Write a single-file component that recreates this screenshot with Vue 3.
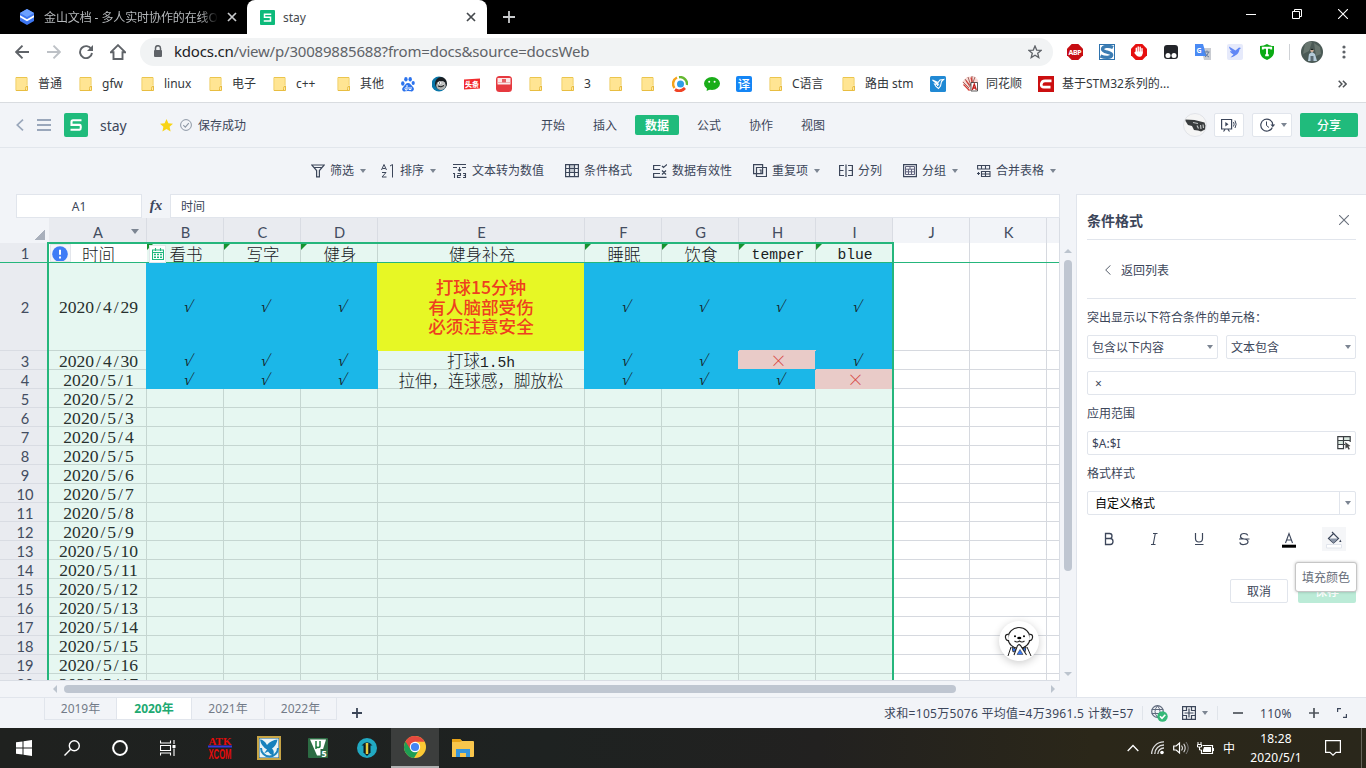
<script setup>
const bookmarks = [
  { w: 64, k: 'folder', t: '普通' },
  { w: 62, k: 'folder', t: 'gfw' },
  { w: 68, k: 'folder', t: 'linux' },
  { w: 64, k: 'folder', t: '电子' },
  { w: 64, k: 'folder', t: 'c++' },
  { w: 64, k: 'folder', t: '其他' },
  { w: 32, k: 'paw' },
  { w: 32, k: 'penguin' },
  { w: 32, k: 'news' },
  { w: 32, k: 'train' },
  { w: 32, k: 'folder' },
  { w: 48, k: 'folder', t: '3' },
  { w: 32, k: 'folder' },
  { w: 32, k: 'folder' },
  { w: 32, k: 'swirl' },
  { w: 32, k: 'wechat' },
  { w: 32, k: 'yi' },
  { w: 73, k: 'folder', t: 'C语言' },
  { w: 89, k: 'folder', t: '路由 stm' },
  { w: 32, k: 'bird' },
  { w: 76, k: 'cards', t: '同花顺' },
  { w: 300, k: 'csdn', t: '基于STM32系列的...' },
]
const menus = ['开始', '插入', '数据', '公式', '协作', '视图']
const tools = [
  { k: 'filter', t: '筛选', w: 70, c: true },
  { k: 'sort', t: '排序', w: 72, c: true },
  { k: 'num', t: '文本转为数值', w: 112 },
  { k: 'cond', t: '条件格式', w: 88 },
  { k: 'valid', t: '数据有效性', w: 100 },
  { k: 'dup', t: '重复项', w: 86, c: true },
  { k: 'split', t: '分列', w: 64 },
  { k: 'group', t: '分组', w: 74, c: true },
  { k: 'merge', t: '合并表格', w: 84, c: true },
]
const cols = ['A', 'B', 'C', 'D', 'E', 'F', 'G', 'H', 'I', 'J', 'K', '']
const body = {
  1: ['时间', '看书', '写字', '健身', '健身补充', '睡眠', '饮食', 'temper', 'blue'],
  2: ['2020/4/29', '√', '√', '√', '打球15分钟\n有人脑部受伤\n必须注意安全', '√', '√', '√', '√'],
  3: ['2020/4/30', '√', '√', '√', '打球1.5h', '√', '√', '×', '√'],
  4: ['2020/5/1', '√', '√', '√', '拉伸，连球感，脚放松', '√', '√', '√', '×'],
}
const rows = Array.from({ length: 20 }, (_, i) => {
  const n = i + 1
  const vals = body[n] || ['2020/5/' + (n - 3)]
  return {
    n,
    cells: cols.map((c, j) => {
      const t = vals[j] || ''
      const isDate = j === 0 && n > 1
      return {
        t,
        parts: isDate ? t.split('/') : null,
        mixed: n === 3 && j === 4 ? ['打球', '1.5h'] : null,
        cls: {
          sel: j < 9,
          active: n === 1 && j === 0,
          tri: n === 1 && j > 0 && j < 9 && j !== 4,
          blue: t === '√',
          pink: t === '×',
          yellow: n === 2 && j === 4,
          latin: n === 1 && j > 6,
          date: isDate,
          last: j === 8,
          head: n === 1,
        },
      }
    }),
  }
})
const sheets = [
  { t: '2019年', w: 73 },
  { t: '2020年', w: 75, on: true },
  { t: '2021年', w: 73 },
  { t: '2022年', w: 72 },
]
</script>

<template>
  <div class="screen" lang="zh-CN">
    <!-- browser tabs -->
    <div class="tabs">
      <div class="tab1">
        <svg width="16" height="16" viewBox="0 0 16 16"><path d="M8 0l7 4v8l-7 4-7-4V4z" fill="#3d76f0"/><path d="M8 0l7 4-7 4-7-4z" fill="#6ba0ff"/><path d="M1 6.2l7 4 7-4v2l-7 4-7-4z" fill="#fff"/></svg>
        <span class="t1">金山文档 - 多人实时协作的在线O</span>
        <svg class="tx" width="10" height="10" viewBox="0 0 10 10"><path d="M1 1l8 8M9 1l-8 8" stroke="#c9cbcd" stroke-width="1.7"/></svg>
      </div>
      <div class="tab2">
        <span class="slogo s15"><svg width="9" height="9" viewBox="0 0 12 12"><path d="M11 1.5H2V5.800H10V10.500H1" fill="none" stroke="#fff" stroke-width="2"/></svg></span>
        <span class="t2">stay</span>
        <svg class="tx" width="10" height="10" viewBox="0 0 10 10"><path d="M1 1l8 8M9 1l-8 8" stroke="#45494d" stroke-width="1.7"/></svg>
      </div>
      <svg class="plus" width="12" height="12" viewBox="0 0 12 12"><path d="M6 0v12M0 6h12" stroke="#c9cbcd" stroke-width="1.8"/></svg>
      <div class="winbtns">
        <svg width="10" height="10"><path d="M0 5.5h10" stroke="#fff"/></svg>
        <svg width="10" height="10"><path d="M.5 2.5h7v7h-7zM2.500 2V.5h7v7H8" fill="none" stroke="#fff"/></svg>
        <svg width="10" height="10"><path d="M0 0l10 10M10 0L0 10" stroke="#fff" stroke-width="1.1"/></svg>
      </div>
    </div>

    <!-- address bar -->
    <div class="addr">
      <svg width="14" height="14" viewBox="0 0 14 14"><path d="M14 7H1.500M7.500 .7L1.200 7l6.300 6.300" fill="none" stroke="#5f6368" stroke-width="1.900"/></svg>
      <svg width="14" height="14" viewBox="0 0 14 14"><path d="M0 7h12.500M6.500 .7L12.800 7l-6.300 6.300" fill="none" stroke="#bdc1c6" stroke-width="1.900"/></svg>
      <svg width="14" height="14" viewBox="0 0 14 14"><path d="M12.300 4.200A6 6 0 1 0 13 8" fill="none" stroke="#5f6368" stroke-width="1.900"/><path d="M14 0v6H8z" fill="#5f6368"/></svg>
      <svg width="16" height="16" viewBox="0 0 16 16"><path d="M8 1.200L1 8.200h2.500V15h9V8.200H15z" fill="none" stroke="#5f6368" stroke-width="1.900"/></svg>
      <div class="omni">
        <svg width="10" height="13" viewBox="0 0 10 13"><path d="M2.500 6V3.200a2.500 2.500 0 0 1 5 0V6" fill="none" stroke="#5f6368" stroke-width="1.500"/><rect x="1" y="5" width="8" height="7" rx="1" fill="#5f6368"/></svg>
        <span class="url"><b>kdocs.cn</b>/view/p/30089885688?from=docs&amp;source=docsWeb</span>
        <svg class="fav" width="14" height="14" viewBox="0 0 14 14"><path d="M7 1l1.700 4.100 4.400.3-3.400 2.800 1.100 4.300L7 10.200l-3.800 2.300 1.100-4.300L.9 5.400l4.400-.3z" fill="none" stroke="#5f6368" stroke-width="1.300"/></svg>
      </div>
      <div class="exts">
        <svg width="16" height="16" viewBox="0 0 16 16"><path d="M4.700 0h6.600L16 4.700v6.600L11.300 16H4.700L0 11.300V4.700z" fill="#c70d12"/><text x="8" y="10.600" font-size="7" font-weight="bold" fill="#fff" text-anchor="middle" textLength="13">ABP</text></svg>
        <svg width="16" height="16" viewBox="0 0 16 16"><rect x=".5" y=".5" width="15" height="15" fill="#fff" stroke="#2f73ad"/><path d="M14 3.500C10 1.500 3.500 2 3.500 5.200S13 8 12.700 11 6 14 1.500 12" fill="none" stroke="#3c7db3" stroke-width="3.300"/></svg>
        <svg width="16" height="16" viewBox="0 0 16 16"><path d="M4.700 0h6.600L16 4.700v6.600L11.300 16H4.700L0 11.300V4.700z" fill="#e60f0f"/><path d="M5.300 8V4.300M7.200 8V3M9.200 8V3.200M11 9V4.600" stroke="#fff" stroke-width="1.400" stroke-linecap="round"/><path d="M4.600 7.500h7.100c.2 3.500-.9 5.300-3.200 5.300S5.200 11.500 3.200 8.700z" fill="#fff"/></svg>
        <svg width="16" height="16" viewBox="0 0 16 16"><rect x="1" y="1" width="14" height="14" rx="3" fill="#23252a"/><circle cx="5" cy="11.500" r="2.500" fill="#fff"/><circle cx="11" cy="11.500" r="2.500" fill="#fff"/></svg>
        <svg width="16" height="16" viewBox="0 0 16 16"><path d="M6 4h10v12H9z" fill="#c9ccd2"/><path d="M0 0h8l3.500 12H0z" fill="#4a8af4"/><text x="1.400" y="8.500" font-size="7" font-weight="bold" fill="#fff">G</text><path d="M9 8h5.500M12 6.500V8M13.500 8q-.8 3.500-3.500 5M10.500 9.500q1 2.500 3.500 3.500" stroke="#6b7f9f" fill="none"/></svg>
        <svg width="16" height="16" viewBox="0 0 16 16"><rect width="16" height="16" rx="2" fill="#e6eafb"/><path d="M2 2.500l6.500 4L12 3.500l2 .6-1.600 1.400C12 9.500 9 12 3.500 13.500l3-3C4 9.500 3 8 3.200 6.800l2 .6C3.300 6 2.300 4.500 2 2.500z" fill="#6187f5"/></svg>
        <svg width="16" height="16" viewBox="0 0 16 16"><path d="M1 2q4 0 7-2 3 2 7 2v6q0 5-7 8-7-3-7-8z" fill="#0aab14"/><path d="M3.800 5.500V3.800h8.400v1.700M8 3.500v7.500M6.200 11.200h3.600" stroke="#fff" stroke-width="1.900" fill="none"/></svg>
      </div>
      <i class="sep"></i>
      <svg class="face" width="22" height="22" viewBox="0 0 22 22"><circle cx="11" cy="11" r="11" fill="#4b5a56"/><path d="M4 3q3-3 7-2l-3 9-6 3zM13 2l6 4 1 7-5 2z" fill="#68766f"/><path d="M7 20l1-7 3-2 3 2 2 7z" fill="#b5cbd8"/><path d="M9.500 15h3v5h-3z" fill="#5a6a72"/><circle cx="11" cy="9.500" r="1.700" fill="#d0ae98"/><path d="M9.200 9q1.800-3 3.600 0z" fill="#15201f"/></svg>
      <svg class="kebab" width="4" height="14"><circle cx="2" cy="2" r="1.600" fill="#5f6368"/><circle cx="2" cy="7" r="1.600" fill="#5f6368"/><circle cx="2" cy="12" r="1.600" fill="#5f6368"/></svg>
    </div>

    <!-- bookmarks -->
    <div class="marks">
      <div v-for="(b, i) in bookmarks" :key="i" class="mark" :style="{ width: b.w + 'px' }">
        <svg width="16" height="16" viewBox="0 0 16 16">
          <g v-if="b.k === 'folder'"><path d="M2 1.500h11v8M2 1.500v13h8" fill="#ffe593" stroke="#ebc54d"/><path d="M2.500 2h10v12h-10z" fill="#ffe593"/><path d="M2 14.500h11.500v-4.500q-2 0-2 2.500v2" fill="#ffe9a4" stroke="#e8bd41"/></g>
          <g v-else-if="b.k === 'paw'" fill="#2c73ed"><ellipse cx="2.800" cy="7.500" rx="1.700" ry="2.200"/><ellipse cx="5.900" cy="3.200" rx="1.700" ry="2.300"/><ellipse cx="10.200" cy="3.300" rx="1.700" ry="2.300"/><ellipse cx="13.200" cy="7" rx="1.600" ry="2.100"/><path d="M8 7c2.200 0 3 2.200 4.600 3.400C15.500 13 13 16 10.500 15.300q-2.500-.5-5 0C2.500 16 .8 13 3.600 10.400 5.300 9 5.800 7 8 7z"/><path d="M7 9v5H5.500q-1.500-1.500 1-3M9 11v2.500h2V11" fill="none" stroke="#fff"/></g>
          <g v-else-if="b.k === 'penguin'"><circle cx="7" cy="8" r="7.500" fill="#0a77a9"/><ellipse cx="9" cy="7.500" rx="6" ry="6.500" fill="#191e22"/><ellipse cx="9" cy="9.500" rx="4.800" ry="4.500" fill="#aeb1b0"/><circle cx="7.500" cy="7" r="1.500" fill="#fff"/><circle cx="11" cy="7" r="1.500" fill="#fff"/><path d="M6 10q3 2 6-.5M7 7h1M10.500 7h1" stroke="#111" fill="none"/></g>
          <g v-else-if="b.k === 'news'"><path d="M0 3.500L16 2.500v10L0 13.500z" fill="#f12c2e"/><text x="8" y="11" font-size="7" font-weight="900" fill="#fff" text-anchor="middle">头条</text></g>
          <g v-else-if="b.k === 'train'"><rect width="16" height="16" rx="3.500" fill="#e6393f"/><path d="M1.500 2h13v6.500h-13z" fill="#fbe9e9"/><path d="M6 3h4v4H6z" fill="#e76064"/><path d="M1.500 6.500h13" stroke="#e9a3a5" stroke-width=".8"/></g>
          <g v-else-if="b.k === 'swirl'" fill="none"><path d="M5 1.500A7 7 0 0 0 2.500 12" stroke="#f7a319" stroke-width="2.500"/><path d="M7 1.200A7 7 0 0 1 15 9" stroke="#65b832" stroke-width="2.500"/><path d="M3 13.500q5 3.500 10-1.500" stroke="#f04224" stroke-width="2.800"/><circle cx="8.500" cy="8" r="3.500" fill="#2f9de6"/></g>
          <g v-else-if="b.k === 'wechat'"><ellipse cx="8" cy="7.500" rx="8" ry="6.500" fill="#1aad19"/><path d="M3 11l-.3 4 4-2z" fill="#1aad19"/><circle cx="5.200" cy="5.800" r="1" fill="#fff"/><circle cx="10.600" cy="5.800" r="1" fill="#fff"/></g>
          <g v-else-if="b.k === 'yi'"><rect width="16" height="16" rx="2" fill="#1485f5"/><text x="8" y="12.500" font-size="12.500" font-weight="500" fill="#fff" text-anchor="middle">译</text></g>
          <g v-else-if="b.k === 'bird'"><rect width="16" height="16" rx="1.500" fill="#2089d4"/><path d="M2.500 4l5.500 2.500L10 4l3.500-.5-2 2L10.500 10 8.500 12.500 6 10.500 4.500 8l3.500.5zM8 6.500L7.500 10" fill="none" stroke="#fff" stroke-width="1.100"/></g>
          <g v-else-if="b.k === 'cards'"><path d="M0 6l5-5 7-1 4 4v11H6z" fill="#f9d9d4"/><path d="M1 6l6 6M3 3l5 8M6 1l3 9M10 0v9M13 1l-3 8" stroke="#8d4a46" stroke-width=".8"/><path d="M1.500 8.500l6 6M9 1.500l1.500 6M4 4.500l4 5" stroke="#d33a33" stroke-width="1.200"/><path d="M9 6.500h6.500v8.500H9z" fill="#fff" stroke="#333" stroke-width=".8"/><path d="M10.300 14l2-6 2 6M11 12h2.700" fill="none" stroke="#c2211d" stroke-width="1.300"/></g>
          <g v-else><rect width="16" height="16" fill="#cb0f10"/><path d="M13.500 4.800H7Q3.800 4.800 3.300 8t2.700 3.200h6.500" fill="none" stroke="#fff" stroke-width="2.700"/></g>
        </svg>
        <span>{{ b.t }}</span>
      </div>
      <svg class="more" width="9" height="8" viewBox="0 0 9 8"><path d="M.7 .8L3.900 4 .7 7.200M4.900 .8L8.100 4 4.900 7.200" fill="none" stroke="#505458" stroke-width="1.500"/></svg>
    </div>

    <!-- document header -->
    <div class="dochead">
      <div class="left">
        <svg width="8" height="12" viewBox="0 0 8 12"><path d="M7 .7L1.300 6 7 11.300" fill="none" stroke="#9aa7bb" stroke-width="1.700"/></svg>
        <svg class="ham" width="14" height="12"><path d="M0 1h14M0 6h14M0 11h14" stroke="#9aa7bb" stroke-width="2"/></svg>
        <span class="slogo s24"><svg width="12" height="12" viewBox="0 0 12 12"><path d="M11.500 1.200H3Q1.500 1.200 1.500 3V5.900H9.500Q10.800 5.900 10.800 8.200T9.500 10.800H.5" fill="none" stroke="#fff" stroke-width="2.100"/></svg></span>
        <span class="dname">stay</span>
        <svg class="star" width="13" height="13" viewBox="0 0 13 13"><path d="M6.500 0l1.900 4.200 4.600.5-3.400 3.100 1 4.700-4.100-2.400-4.100 2.400 1-4.700L0 4.700l4.600-.5z" fill="#f8d416"/></svg>
        <svg class="okc" width="12" height="12" viewBox="0 0 12 12"><circle cx="6" cy="6" r="5.400" fill="none" stroke="#8d97a5"/><path d="M3.300 6.200l2 1.900 3.500-4" fill="none" stroke="#8d97a5" stroke-width="1.100"/></svg>
        <span class="saved">保存成功</span>
      </div>
      <div class="menus"><span v-for="m in menus" :key="m" :class="{ on: m === '数据' }">{{ m }}</span></div>
      <div class="right">
        <svg class="gun" width="24" height="24" viewBox="0 0 24 24"><circle cx="12" cy="12" r="11.500" fill="#f5f5f5" stroke="#e1e3e8"/><path d="M2.500 6.500l9 .5 10 2.500 1 3-.5 4-4 2-3-1-4-.5-2-4-4-1-2.500-4z" fill="#3a3d3f"/><path d="M10 9.500l5 1M14 12.500l1.500 3M17.500 12l.5 4M20 11.500l.5 3.500" stroke="#c2c5c6" stroke-width="1.200"/></svg>
        <span class="hb h1"><svg width="16" height="14" viewBox="0 0 16 14"><path d="M.6 1.500h10v9.500H.6zM2.500 13.500l1.500-2M8.500 13.500L7 11.500" fill="none" stroke="#3c465a" stroke-width="1.200"/><path d="M4.300 4v4.600L7.500 6.300z" fill="#3c465a"/><path d="M12.500 4q1.300 2.200 0 4.500M14 2.500q2.300 3.700 0 7.500" fill="none" stroke="#3c465a"/></svg></span>
        <span class="hb h2"><svg width="15" height="14" viewBox="0 0 15 14"><path d="M12.300 9.500A6 6 0 1 1 12.800 7" fill="none" stroke="#3c465a" stroke-width="1.200"/><path d="M10.400 6.500h4.800L12.800 9.200z" fill="#3c465a"/><path d="M6.500 3.500V7.500l2.500 2" fill="none" stroke="#3c465a"/></svg><i class="car"></i></span>
        <span class="share">分享</span>
      </div>
    </div>

    <!-- data tools -->
    <div class="tools">
      <div v-for="b in tools" :key="b.k" class="tool" :style="{ width: b.w + 'px' }">
        <svg width="14" height="14" viewBox="0 0 14 14" fill="none" stroke="#3c465a" stroke-width="1">
          <path v-if="b.k === 'filter'" d="M.7 1h12.600L8.400 6.500v6.300H5.600V6.500zM3.500 3.500h7" stroke-width="1.200"/>
          <g v-else-if="b.k === 'sort'"><path d="M.5 6L3 .5 5.500 6M1.500 4.500h3M1 8.500h4L1 13h4.500M9 2l2.500-1.500V13.500"/></g>
          <g v-else-if="b.k === 'num'"><path d="M0 .5h13M0 3.500h4M9 3.500h4M6.500 3v4M5 5.500L6.500 7 8 5.500M1.500 9v5M0 9.500h1.500M4.500 9.500h3v2h-3v2h3M10 9.500h2.500v4H10M10.500 11.500h2" stroke-width="1.100"/></g>
          <g v-else-if="b.k === 'cond'"><path d="M4 1h5v8H4z" fill="#c5cad2" stroke="none"/><path d="M.6 .6h12.800v12H.6zM.5 4.500h13M.5 8.500h13M4.500 .5v12M9.500 .5v12" stroke-width="1.200"/></g>
          <g v-else-if="b.k === 'valid'"><path d="M7.500 1.500H.6v4H7M7 9.500H.6v3.800H13.500M9 2l1.500 1.500L14 .5M9 6.500l4 4M13 6.500l-4 4" stroke-width="1.200"/></g>
          <g v-else-if="b.k === 'dup'"><path d="M.6 .6h9v9h-9zM3.500 3.500h10v9h-10zM6.500 6h1.500v4" stroke-width="1.200"/></g>
          <g v-else-if="b.k === 'split'"><path d="M7 .5v12.500M5 1.500H.6v10H5M9 1.500h4.400v10H9M.5 6.500h4M9.500 6.500h4" stroke-width="1.200"/></g>
          <g v-else-if="b.k === 'group'"><path d="M.6 .6h12.800v12H.6z" stroke-width="1.200"/><path d="M2.500 2.500h9v8h-9zM2.500 5.200h9M2.500 7.800h9M5.500 5v5.500M8.500 5v5.500M7 2.500V5" stroke="#62647e"/></g>
          <g v-else><path d="M.6 1.500h12v3.500H.6zM4.500 1.500V5M8.500 1.500V5M4.500 7.500h8.500v5H4.500zM4.500 10h9M8.500 7v5.500M0 9.500h3M1.500 8v3" stroke-width="1.100"/></g>
        </svg>
        <span>{{ b.t }}</span><i v-if="b.c" class="car"></i>
      </div>
    </div>

    <div class="work">
      <div class="sheet">
        <div class="fbar">
          <span class="name">A1</span><span class="fx">fx</span><span class="fml">时间</span>
        </div>
        <div class="gridwrap">
          <div class="grid">
            <div class="corner"></div>
            <div v-for="(c, j) in cols" :key="'c' + j" class="ch" :class="{ csel: j < 9 }">{{ c }}<i v-if="j === 0" class="car big"></i></div>
            <template v-for="r in rows" :key="r.n">
              <div class="rh">{{ r.n }}</div>
              <div v-for="(c, j) in r.cells" :key="j" class="cell" :class="c.cls">
                <span v-if="c.parts"><template v-for="(p, k) in c.parts" :key="k"><i v-if="k" class="sl">/</i>{{ p }}</template></span>
                <span v-else-if="c.mixed">{{ c.mixed[0] }}<i class="mono">{{ c.mixed[1] }}</i></span>
                <span v-else>{{ c.t }}</span>
              </div>
            </template>
          </div>
          <div class="selbox"></div>
          <div class="freeze"></div>
          <div class="warn"><svg width="16" height="16"><circle cx="8" cy="8" r="7.800" fill="#3f7cf6"/><path d="M8 3.800v5M8 10.500v2" stroke="#fff" stroke-width="2"/></svg></div>
          <div class="cal"><svg width="12" height="12" viewBox="0 0 12 12"><path d="M.5 2h11v9.500H.5zM.5 4.500h11M3.500 0v3M8.500 0v3" fill="none" stroke="#20b67c" stroke-width="1.100"/><path d="M2 6.500h8M2 9.200h8" stroke="#20b67c" stroke-width="1.400" stroke-dasharray="2 1"/></svg></div>
          <div class="bear">
            <svg width="32" height="32" viewBox="0 0 32 32"><path d="M8 22l-3 9M24 22l4 9" stroke="#222" fill="none"/><path d="M9 22l5 3-4 2zM23 22l-5 3 4 2z" fill="#3a7bf6" stroke="#222" stroke-width=".8"/><ellipse cx="16" cy="13" rx="11" ry="10.500" fill="#fff" stroke="#222" stroke-width="1.200"/><path d="M5.500 9.500q-3.500-.5-3 3t3.500 3M26.500 9.500q3.500-.5 3 3t-3.500 3" fill="#fff" stroke="#222" stroke-width="1.200"/><circle cx="12" cy="11.300" r="1"/><circle cx="21" cy="11.300" r="1"/><ellipse cx="16.300" cy="13" rx="2.100" ry="1.300"/><path d="M11.500 16q2.500 2 5 0 2.500 2 5 0" fill="none" stroke="#222" stroke-width="1.100"/><path d="M11 30l3.500-9.500 1.500-1 1.500 1 6 9.500" fill="#fff" stroke="#222" stroke-width="1.100"/><path d="M14 29.500l3-5 3 5z" fill="#3a7bf6" stroke="#222" stroke-width=".5"/></svg>
          </div>
        </div>
        <div class="hscroll"><i class="al"></i><i class="thumb"></i><i class="ar"></i></div>
      </div>
      <div class="vscroll"><i class="au"></i><i class="thumb"></i><i class="ad"></i></div>

      <div class="panel">
        <div class="ptitle">条件格式<svg width="10" height="10"><path d="M0 0l10 10M10 0L0 10" stroke="#6b727e" stroke-width="1.100"/></svg></div>
        <div class="pback"><svg width="6" height="10"><path d="M5.500 .3L.7 5l4.800 4.700" fill="none" stroke="#565e6b"/></svg>返回列表</div>
        <div class="lbl l1">突出显示以下符合条件的单元格：</div>
        <div class="two"><span class="inp a">包含以下内容<i class="car"></i></span><span class="inp b">文本包含<i class="car"></i></span></div>
        <div class="inp x">×</div>
        <div class="lbl l2">应用范围</div>
        <div class="inp rng">$A:$I<svg width="14" height="14" viewBox="0 0 14 14"><path d="M7 1h6v3.500H7zM1 4.500h5.500v4H1z" fill="#d9e8df"/><path d="M8 8.500H.8V.7h12.400v3.800H.8M.8 8.500v4.200H6.500V.7M13.200 4.500V6" fill="none" stroke="#3b3f42" stroke-width="1.200"/><path d="M8.200 6l5.300 4-2 .5 1.400 2.500-1.300.7-1.400-2.500-1.700 1.500z" fill="#464646"/></svg></div>
        <div class="lbl l3">格式样式</div>
        <div class="inp sty">自定义格式<span><i class="car"></i></span></div>
        <div class="fmt">
          <span><svg width="24" height="24" viewBox="0 0 24 24"><path d="M8.500 6.500v11h4.700q2.800 0 2.800-3t-2.800-3H8.500h4q2.500 0 2.500-2.500t-2.500-2.500z" fill="none" stroke="#3c465a" stroke-width="1.300"/></svg></span>
          <span><svg width="24" height="24" viewBox="0 0 24 24"><path d="M11 6.500h4.500M9 17.500h4.500M13.300 6.500l-2.100 11" fill="none" stroke="#3c465a" stroke-width="1.100"/></svg></span>
          <span><svg width="24" height="24" viewBox="0 0 24 24"><path d="M8.500 6v5.500q0 3.500 3.500 3.500t3.500-3.500V6M8 17.500h8.500" fill="none" stroke="#3c465a" stroke-width="1.200"/></svg></span>
          <span><svg width="24" height="24" viewBox="0 0 24 24"><path d="M15.700 8.500Q15.300 6.500 12 6.500T8.500 9t3.500 3q4 .5 4 2.800t-4 2.700-4-2.200M7 12h10.500" fill="none" stroke="#3c465a" stroke-width="1.200"/></svg></span>
          <span><svg width="24" height="24" viewBox="0 0 24 24"><path d="M8.500 16L12 6.500 15.500 16M9.500 13h5" fill="none" stroke="#3c465a" stroke-width="1.100"/><path d="M5 17.700h14v3H5z" fill="#000"/></svg></span>
          <span class="fillbg"><svg width="24" height="24" viewBox="0 0 24 24"><path d="M6.500 11.500l5-5 5 5-5 4.500zM10 5l3 3" fill="none" stroke="#3c465a" stroke-width="1.200"/><path d="M7 11.500h9l-4.500 4.500z" fill="#8994a6"/><path d="M18.300 12.500l1.200 2.500h-2.300z" fill="#3c465a"/><path d="M4.500 17.500h15v3.500h-15z" fill="#fff" stroke="#e1e5ec"/></svg></span>
        </div>
        <div class="btns"><span class="cancel">取消</span><span class="save">保存</span><span class="tip">填充颜色</span></div>
      </div>
    </div>

    <!-- sheet tabs and status -->
    <div class="status">
      <div class="stabs"><span v-for="s in sheets" :key="s.t" :class="{ on: s.on }" :style="{ width: s.w + 'px' }">{{ s.t }}</span></div>
      <svg class="addsh" width="10" height="10"><path d="M5 0v10M0 5h10" stroke="#3b4557" stroke-width="1.800"/></svg>
      <span class="sum">求和=105万5076 平均值=4万3961.5 计数=57</span>
      <i class="d1"></i>
      <svg class="globe" width="17" height="17" viewBox="0 0 17 17"><circle cx="6.500" cy="6.500" r="5.800" fill="none" stroke="#5f6a7d" stroke-width="1.200"/><path d="M6.500 .7q-5 5.800 0 11.600 5-5.800 0-11.600M.7 4.500h11.600M.7 8.500h11.600" fill="none" stroke="#5f6a7d"/><circle cx="11.500" cy="11.500" r="5.200" fill="#35b978"/><path d="M9 11.300l2 2 3.300-3.600" fill="none" stroke="#fff" stroke-width="1.600"/></svg>
      <svg class="gi" width="14" height="14" viewBox="0 0 14 14"><path d="M.6 .6h12.800v12.800H.6zM.6 4.500h3.900V.6M9.500 .6v3.900h3.900M.6 9.500h3.900v3.900M9.500 13.400V9.500h3.900M7 2.500v9M2.500 7h9" fill="none" stroke="#3c465a" stroke-width="1.200"/></svg>
      <i class="car c2"></i>
      <i class="d2"></i>
      <svg class="mn" width="10" height="10"><path d="M0 5h10" stroke="#4e535b" stroke-width="1.700"/></svg>
      <span class="pct">110%</span>
      <svg class="pl" width="10" height="10"><path d="M0 5h10M5 0v10" stroke="#4e535b" stroke-width="1.700"/></svg>
      <svg class="ex" width="10" height="10"><path d="M.6 4V.6H4M6 9.400h3.400V6" fill="none" stroke="#3c465a" stroke-width="1.200"/></svg>
    </div>

    <!-- taskbar -->
    <div class="task">
      <span class="w48"><svg width="16" height="16"><path d="M0 2.300l6.500-.9v6.100H0zM7.500 1.200L16 0v7.500H7.500zM0 8.500h6.500v6.100L0 13.700zM7.500 8.500H16V16l-8.500-1.200z" fill="#fff"/></svg></span>
      <span class="w48"><svg width="16" height="16"><circle cx="10.300" cy="5.700" r="5" fill="none" stroke="#fff" stroke-width="1.400"/><path d="M6.700 9.300L.5 15.500" stroke="#fff" stroke-width="1.400"/></svg></span>
      <span class="w48"><svg width="16" height="16"><circle cx="8" cy="8" r="6.900" fill="none" stroke="#fff" stroke-width="2"/></svg></span>
      <span class="w48"><svg width="16" height="16"><path d="M.5 .5V3h10V.5M.5 15.500V13h10v2.500M.5 5.500h10v5H.5zM14 0v4M14 8.500V16" fill="none" stroke="#fff" stroke-width="1.100"/><path d="M12.500 5h3v3h-3z" fill="#fff"/></svg></span>
      <span class="w49"><svg width="24" height="24"><text x="12" y="8.500" class="atk" textLength="23" lengthAdjust="spacingAndGlyphs">ATK</text><path d="M0 10.500h24" stroke="#3538d8" stroke-width="2"/><text x="12" y="23" class="xcom" textLength="23" lengthAdjust="spacingAndGlyphs">XCOM</text></svg></span>
      <span class="w49"><svg width="24" height="24"><path d="M1 1h22v22H1z" fill="#15608f" stroke="#c6a446" stroke-width="2"/><path d="M2.500 2.500h19v19h-19z" fill="#e9f3f6"/><path d="M4 12a8.500 8.500 0 0 0 17 0" fill="none" stroke="#1d85bf" stroke-width="2"/><path d="M3 3.500q4 0 7 5.500 4-5 10.500-5.500-1 6-5.500 9 3 3 1 7-3-1-5-4l-4 2 3-4Q4 10 3 3.500z" fill="#1681bd"/></svg></span>
      <span class="w49"><svg width="20" height="20"><rect width="20" height="20" rx="1" fill="#2c6b43"/><path d="M2 1.500h16l-5 16H9z" fill="#fff"/><path d="M8 3v5q0 1.500 2 1.500t2-1.500V3M8 6v5" fill="none" stroke="#1d7b3e" stroke-width="1.500"/><path d="M12.500 11h7v8.500h-7z" fill="#2c6b43"/><text x="13.500" y="18.500" font-size="9" font-weight="bold" fill="#fff">5</text></svg></span>
      <span class="w49"><svg width="20" height="20"><circle cx="10" cy="10" r="10" fill="#21a9c2"/><path d="M4.500 7.500Q10 1 15.500 7.500z" fill="#15272e"/><path d="M6.500 7h7v7.500L10 18l-3.500-3.500z" fill="#121a1c"/><path d="M10 5v11" stroke="#e5cc40" stroke-width="2.500"/></svg></span>
      <span class="w48 act"><svg width="22" height="22" viewBox="0 0 22 22"><circle cx="11" cy="11" r="11" fill="#fcc934"/><path d="M11 11L1.500 5.500A11 11 0 0 0 10 22l5-8z" fill="#1e9e54"/><path d="M1.500 5.500A11 11 0 0 1 20.600 5.800H11L6.500 13.500z" fill="#e5493f"/><circle cx="11" cy="11" r="5.200" fill="#fff"/><circle cx="11" cy="11" r="4.100" fill="#4285f4"/></svg></span>
      <span class="w48"><svg width="22" height="19"><path d="M0 1q0-1 1-1h7l2 2h11q1 0 1 1v14q0 1-1 1H0z" fill="#f9c64c"/><path d="M0 1q0-1 1-1h7l2 2-2 1H0z" fill="#e8a317"/><path d="M4 18v-8h14v8h-4v-4H8v4z" fill="#3695dc"/></svg></span>
      <div class="tray">
        <svg class="up" width="12" height="8"><path d="M.7 7L6 1.500 11.300 7" fill="none" stroke="#fff" stroke-width="1.300"/></svg>
        <svg class="wf" width="14" height="14"><path d="M.7 13A12 12 0 0 1 13 .9M3.800 13A9 9 0 0 1 13 4M6.800 13A6 6 0 0 1 13 7" fill="none" stroke="#ddd" stroke-width="1.300"/><circle cx="11" cy="11.500" r="1.800" fill="#fff"/></svg>
        <svg class="vo" width="17" height="14"><path d="M.7 5h2.500l3.300-3v10L3.200 9H.7z" fill="none" stroke="#fff" stroke-width="1.200"/><path d="M8.500 4.500q2 2.500 0 5M10.700 2.700q3 4.300 0 8.600" fill="none" stroke="#ddd" stroke-width="1.100"/><path d="M13 1q4.500 6 0 12" fill="none" stroke="#777"/></svg>
        <svg class="ba" width="17" height="13"><path d="M5.500 3.500h10v8h-11V8M16.500 6v3" fill="none" stroke="#fff" stroke-width="1.200"/><path d="M7 5h7v5H6V8z" fill="#fff"/><path d="M1 0v2M4 0v2M.5 2.500h4V5h-4zM2.500 5v3h2" fill="none" stroke="#fff"/></svg>
        <span class="zh">中</span>
        <span class="clk">18:28<br>2020/5/1</span>
        <svg class="no" width="16" height="16"><path d="M.6 .6h14.800v11.800H11L8 15.200 5 12.400H.6z" fill="none" stroke="#fff" stroke-width="1.200"/></svg>
        <i class="edge"></i>
      </div>
    </div>
  </div>
</template>

<style>
html, body { overflow: hidden; }
</style>

<style scoped>
* { box-sizing: border-box; }
i { font-style: normal; }
svg { flex: none; display: block; }
.screen { width: 1366px; height: 768px; overflow: hidden; display: flex; flex-direction: column; background: #f2f4f8; font-family: "Noto Sans", "Noto Sans CJK SC", sans-serif; font-size: 12px; color: #3c465a; white-space: nowrap; }
.car { width: 0; height: 0; border: 3px solid transparent; border-top: 4px solid #7c8592; border-bottom: 0; flex: none; }

.tabs { height: 34px; background: #000; display: flex; align-items: center; flex: none; }
.tab1 { width: 247px; padding-left: 19px; display: flex; align-items: center; }
.t1 { width: 174px; margin-left: 9px; overflow: hidden; color: #b5b8bb; -webkit-mask-image: linear-gradient(90deg, #000 90%, transparent); mask-image: linear-gradient(90deg, #000 90%, transparent); letter-spacing: -.1px; }
.tab1 .tx { margin-left: 9px; }
.tab2 { width: 240px; height: 34px; background: #fff; border-radius: 8px 8px 0 0; display: flex; align-items: center; padding-left: 13px; }
.slogo { background: #0dba7b; display: flex; align-items: center; justify-content: center; flex: none; }
.s15 { width: 15px; height: 15px; border-radius: 1px; }
.s24 { width: 24px; height: 24px; border-radius: 2px; background: #20bb7c; margin-left: 13px; }
.t2 { color: #45494d; margin-left: 8px; width: 183px; }
.plus { margin-left: 16px; }
.winbtns { margin-left: auto; margin-right: 18px; margin-top: -6px; display: flex; gap: 36px; }

.addr { height: 35px; background: #fff; display: flex; align-items: center; padding-left: 15px; flex: none; }
.addr > svg:nth-child(2) { margin-left: 18px; }
.addr > svg:nth-child(3) { margin-left: 18px; }
.addr > svg:nth-child(4) { margin-left: 17px; }
.omni { margin-left: 14px; width: 913px; height: 28px; border-radius: 14px; background: #f1f3f4; display: flex; align-items: center; padding-left: 13px; }
.url { margin-left: 11px; font-size: 15px; line-height: 20px; padding-bottom: 2px; color: #5f6368; letter-spacing: -.2px; }
.url b { font-weight: 400; color: #202124; }
.fav { margin-left: auto; margin-right: 11px; }
.exts { display: flex; gap: 16px; margin-left: 14px; }
.sep { width: 1px; height: 16px; background: #cfd2d6; margin-left: 14px; }
.face { margin-left: 11px; }
.kebab { margin-left: 19px; }

.marks { height: 34px; background: #fff; border-bottom: 1px solid #d9dce0; display: flex; align-items: center; padding: 0 0 3px 14px; flex: none; }
.mark { display: flex; align-items: center; color: #33373b; flex: none; }
.mark span { margin-left: 8px; line-height: 16px; }

.dochead { height: 45px; border-bottom: 1px solid #e2e6ec; display: flex; align-items: center; padding-left: 16px; flex: none; }
.left { display: flex; align-items: center; width: 511px; }
.ham { margin-left: 13px; }
.dname { font-size: 14px; margin-left: 12px; width: 48px; }
.star { margin-left: 12px; }
.okc { margin-left: 7px; }
.saved { margin-left: 6px; }
.menus { display: flex; }
.menus span { width: 52px; height: 20px; line-height: 22px; text-align: center; }
.menus .on { width: 44px; margin: 0 4px; background: #20bb7c; color: #fff; font-weight: 700; border-radius: 2px; }
.right { margin-left: auto; display: flex; align-items: center; margin-right: 8px; }
.hb { height: 24px; background: #fff; border: 1px solid #e1e5ec; border-radius: 2px; display: flex; align-items: center; }
.h1 { width: 30px; margin-left: 7px; padding-left: 6px; }
.h2 { width: 40px; margin-left: 8px; padding-left: 7px; gap: 6px; }
.share { width: 58px; height: 24px; line-height: 25px; margin-left: 8px; border-radius: 2px; text-align: center; background: #20bb7c; color: #fff; font-weight: 500; }

.tools { height: 46px; display: flex; align-items: center; padding-left: 311px; flex: none; }
.tool { display: flex; align-items: center; flex: none; }
.tool span { margin-left: 5px; line-height: 18px; }
.tool .car { margin-left: 6px; }

.work { height: 503px; display: flex; flex: none; }
.sheet { width: 1060px; display: flex; flex-direction: column; }
.fbar { height: 24px; display: flex; padding-left: 16px; line-height: 23px; flex: none; }
.name { width: 126px; background: #fff; border: 1px solid #e1e5ec; text-align: center; }
.fx { width: 28px; text-align: center; font: italic bold 15px/22px "Liberation Serif", serif; }
.fml { flex: 1; background: #fff; border: 1px solid #e1e5ec; padding-left: 10px; }
.gridwrap { height: 463px; position: relative; overflow: hidden; border-right: 1px solid #d9dde4; border-bottom: 1px solid #d9dde4; }
.grid { display: grid; grid-template-columns: 49px 98px repeat(3, 77px) 207px repeat(6, 77px) 77px; grid-template-rows: 25px 20px 88px; grid-auto-rows: 19px; background: #fff; }
.corner { background: linear-gradient(135deg, transparent 50%, #a9b0bc 50%) 34px 11px / 11px 11px no-repeat, #f2f4f8; }
.ch { position: relative; font: 14.67px/29px Lato, sans-serif; text-align: center; background: #f2f4f8; border-right: 1px solid #d9dce3; color: #434d60; padding-left: 1px; }
.csel { background: #e9ebf0; }
.big { position: absolute; right: 7px; top: 11px; border-width: 4px; border-top-width: 5px; border-bottom: 0; }
.rh { font: 14.67px/18px Lato, sans-serif; background: #e9ebf0; border-bottom: 1px solid #d9dce3; color: #434d60; padding: 3px 0 0 1px; display: flex; align-items: center; justify-content: center; }
.cell { position: relative; border-right: 1px solid #d6d9df; border-bottom: 1px solid #d6d9df; display: flex; align-items: center; justify-content: center; font-family: "Noto Sans CJK SC", sans-serif; font-size: 16.5px; line-height: 18px; color: #17201e; font-weight: 300; min-width: 0; padding-top: 1px; }
.cell > span { white-space: pre; text-align: center; }
.sel { background: #e6f7f1; border-color: #c5d6d1; }
.date { font-family: "Liberation Serif", serif; font-size: 17.6px; padding: 1px 0 0 2px; color: #27302e; }
.active { background: #fff; border-color: #fff; }
.head { padding: 2px 0 0 2px; }
.mono { font-family: "Liberation Mono", monospace; font-size: 14.67px; line-height: 14px; }
.latin { font-family: "Liberation Mono", monospace; font-size: 14.67px; padding-top: 5px; }
.tri::before { content: ""; position: absolute; left: 0; top: 1px; border-top: 6px solid #17922f; border-right: 6px solid transparent; }
.sl { display: inline-block; width: 8.8px; text-align: center; }
.blue { background: #1bb7e8; border-color: #1bb7e8; box-shadow: -1px 0 #1bb7e8, 0 -1px #1bb7e8; padding: 1px 0 0 6px; font-family: "Liberation Serif", serif; font-size: 16px; }
.blue > span { transform: skewX(-14deg); line-height: 16px; }
.pink { background: #e9cbc8; border-color: #e9cbc8; color: #d6423c; box-shadow: -1px 0 #e9cbc8, 0 -1px #e9cbc8; padding: 0 0 0 3px; }
.pink > span { line-height: 16px; }
.last.blue, .last.pink { border-right-color: #e6f7f1; }
.yellow { background: #e7f725; border-color: #e7f725; color: #ee3f1f; box-shadow: -1px 0 #e7f725; font-size: 17.6px; font-weight: 500; line-height: 19.5px; padding: 0; }
.selbox { position: absolute; left: 47px; top: 24px; width: 847px; height: 600px; border: 2px solid #25b67c; }
.freeze { position: absolute; left: 0; right: 0; top: 44px; height: 1px; background: #25b67c; }
.warn { position: absolute; left: 50px; top: 26px; width: 21px; height: 18px; background: #f4f6f9; overflow: hidden; border: 1px solid #e3e6ec; padding: 1px; }
.cal { position: absolute; left: 149px; top: 27px; width: 17px; height: 18px; background: #fff; border: 1px solid #e1e8ea; padding: 2px; }
.bear { position: absolute; left: 999px; top: 403px; width: 40px; height: 40px; border-radius: 50%; background: #fff; box-shadow: 0 2px 8px rgba(0, 0, 0, .2); padding: 4px; }
.hscroll { height: 16px; display: flex; align-items: center; padding-left: 53px; }
.al { border: 4px solid transparent; border-right: 4px solid #bcc4ce; border-left: 0; }
.hscroll .thumb { width: 892px; height: 8px; border-radius: 4px; background: #bfc6d1; margin-left: 7px; }
.ar { margin-left: 95px; border: 4px solid transparent; border-left: 4px solid #bcc4ce; border-right: 0; }
.vscroll { width: 16px; display: flex; flex-direction: column; align-items: center; padding-top: 55px; }
.au { border: 4px solid transparent; border-bottom: 4px solid #bcc4ce; border-top: 0; }
.vscroll .thumb { width: 8px; height: 311px; border-radius: 4px; background: #bfc6d1; margin-top: 7px; }
.ad { margin-top: 101px; border: 4px solid transparent; border-top: 4px solid #bcc4ce; border-bottom: 0; }

.panel { width: 290px; background: #fff; border: 1px solid #e1e5ec; border-right: 0; border-bottom: 0; padding: 0 10px; }
.ptitle { height: 45px; border-bottom: 1px solid #e1e5ec; font-size: 14px; font-weight: 700; display: flex; align-items: center; justify-content: space-between; padding: 5px 7px 0 0; }
.pback { height: 59px; border-bottom: 1px solid #e1e5ec; display: flex; align-items: center; gap: 10px; padding-left: 18px; padding-top: 2px; }
.lbl { line-height: 18px; }
.l1, .l2, .l3 { margin-top: 10px; }
.inp { height: 24px; border: 1px solid #e1e5ec; border-radius: 2px; display: flex; align-items: center; justify-content: space-between; padding: 0 4px; width: 269px; }
.two { display: flex; gap: 8px; margin-top: 8px; }
.a { width: 131px; }
.b { width: 130px; }
.x { margin-top: 12px; padding-left: 7px; }
.rng { margin-top: 8px; }
.sty { margin-top: 8px; padding: 0 0 0 7px; color: #000; }
.sty span { width: 16px; height: 22px; border-left: 1px solid #e1e5ec; display: flex; align-items: center; justify-content: center; }
.fmt { display: flex; justify-content: space-between; margin: 12px 10px 0; }
.fillbg { background: #f5f6f8; }
.btns { position: relative; display: flex; justify-content: flex-end; gap: 10px; margin-top: 28px; width: 269px; }
.cancel, .save { width: 58px; height: 24px; line-height: 25px; text-align: center; border-radius: 2px; }
.cancel { border: 1px solid #e1e5ec; line-height: 23px; }
.save { background: #bbebd7; color: #fff; font-weight: 500; }
.tip { position: absolute; right: -1px; top: -17px; width: 62px; height: 30px; line-height: 30px; text-align: center; background: #fff; border: 1px solid #c6c6c6; border-radius: 3px; box-shadow: 0 0 3px rgba(0, 0, 0, .25); color: #666d79; }

.status { height: 31px; border-top: 1px solid #e1e5ec; display: flex; align-items: center; flex: none; padding-left: 44px; }
.stabs { display: flex; align-self: flex-start; }
.stabs span { height: 22px; line-height: 22px; text-align: center; border: 1px solid #e1e5ec; border-top: 0; border-left: 0; color: #737b88; }
.stabs span:first-child { border-left: 1px solid #e1e5ec; }
.stabs .on { background: #fff; color: #20a971; font-weight: 700; }
.addsh { margin-left: 15px; margin-top: -1px; }
.sum { margin-left: 522px; width: 258px; letter-spacing: .29px; }
.d1, .d2 { width: 1px; height: 14px; background: #e0e4ea; }
.globe { margin-left: 8px; }
.gi { margin-left: 14px; }
.c2 { margin-left: 6px; }
.d2 { margin-left: 9px; }
.mn { margin-left: 15px; }
.pct { margin-left: 17px; width: 32px; letter-spacing: .3px; }
.pl { margin-left: 17px; }
.ex { margin-left: 18px; }

.task { height: 40px; background: linear-gradient(90deg, #1f211f 0%, #1e2221 40%, #222120 60%, #2b2719 80%, #2a271b); display: flex; flex: none; color: #fff; }
.task > span { height: 40px; display: flex; align-items: center; justify-content: center; flex: none; }
.w48 { width: 48px; }
.w49 { width: 49px; }
.w48 + .w49 { margin-left: 3px; }
.act { background: #3c3e3d; border-bottom: 2px solid #b0b2b2; }
.atk { font: bold 11px "Liberation Serif", serif; fill: #e30b0b; text-anchor: middle; }
.xcom { font: bold 14px "Liberation Sans", sans-serif; fill: #e30b0b; text-anchor: middle; }
.tray { margin-left: auto; display: flex; align-items: center; }
.wf { margin-left: 12px; }
.vo { margin-left: 8px; }
.ba { margin-left: 7px; }
.zh { margin-left: 9px; width: 14px; }
.clk { margin-left: 12px; width: 54px; text-align: center; line-height: 19px; letter-spacing: .2px; }
.no { margin-left: 22px; }
.edge { width: 1px; height: 40px; background: #66645b; margin-left: 20px; margin-right: 4px; }
</style>
